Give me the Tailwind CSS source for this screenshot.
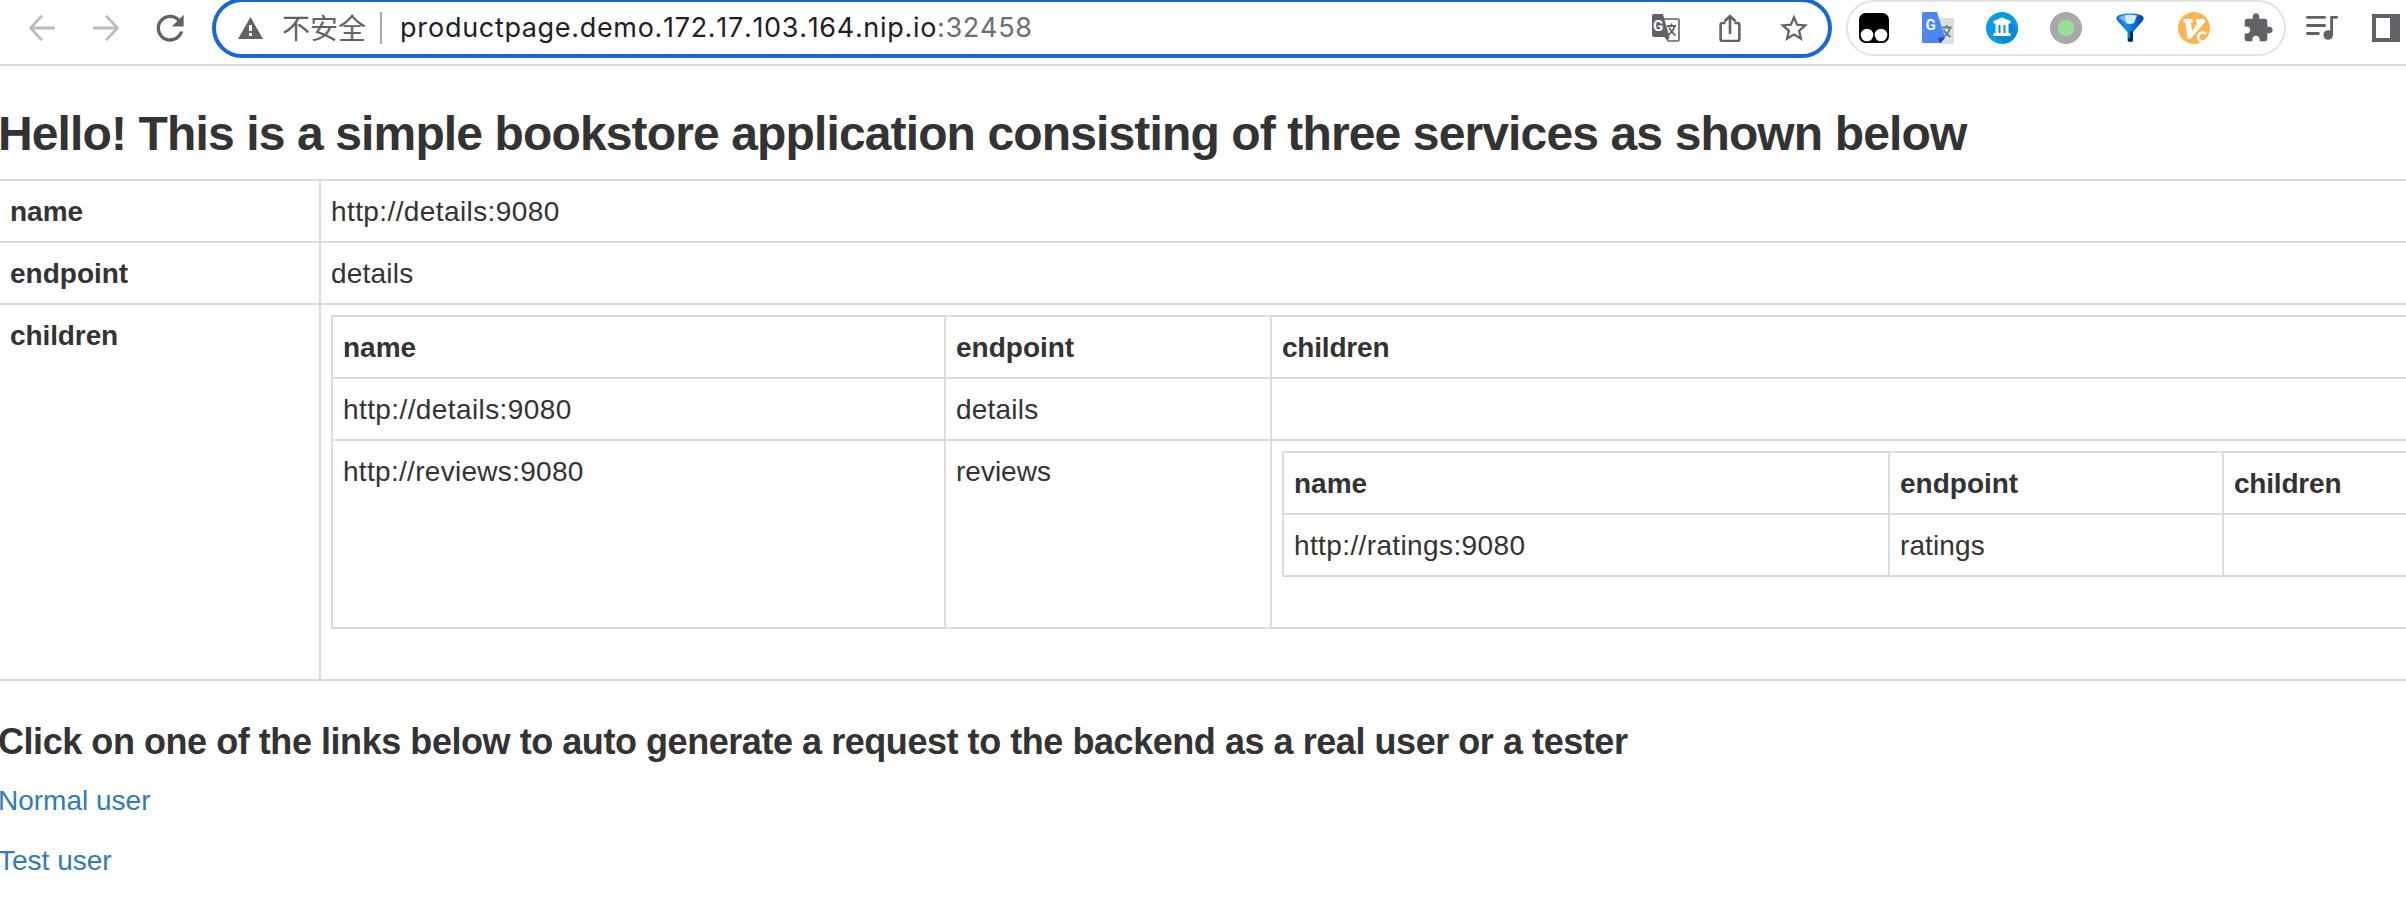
<!DOCTYPE html>
<html lang="en">
<head>
<meta charset="utf-8">
<title>Simple Bookstore App</title>
<script src="https://cdn.jsdelivr.net/npm/@tailwindcss/browser@4"></script>
</head>
<body class="h-[900px] w-[2406px] overflow-hidden bg-white font-['Liberation_Sans',Arial,sans-serif] text-[28px] leading-[40px] text-[#333]">

<!-- Browser toolbar -->
<header class="h-[66px] border-b-2 border-[#dcdcdc]">
  <div class="flex h-14 items-center pl-7 text-[#5f6368]">
    <svg class="size-7 shrink-0" viewBox="0 0 28 28" fill="none" stroke="#babcbe" stroke-width="2.800"><path d="M27 14H3M14 1.800L2.500 14 14 26.200"/></svg>
    <svg class="ml-9 size-7 shrink-0" viewBox="0 0 28 28" fill="none" stroke="#babcbe" stroke-width="2.800"><path d="M1 14h24M14 1.800L25.500 14 14 26.200"/></svg>
    <svg class="ml-9 size-7 shrink-0" viewBox="3.600 3.600 16.600 16.600" fill="currentColor"><path d="M17.650 6.350C16.200 4.900 14.210 4 12 4c-4.420 0-7.990 3.580-7.990 8s3.570 8 7.990 8c3.730 0 6.840-2.550 7.730-6h-2.080c-.82 2.330-3.040 4-5.650 4-3.310 0-6-2.690-6-6s2.690-6 6-6c1.660 0 3.140.69 4.220 1.780L13 11h7V4l-2.350 2.350z"/></svg>

    <!-- Address bar -->
    <div class="ml-7 flex h-[60px] w-[1620px] shrink-0 items-center rounded-full border-4 border-[#1967d2] pr-5 pl-[22px]">
      <svg class="h-[22px] w-[25px] shrink-0" viewBox="0 0 25 22"><path fill="#5f6368" d="M12.500 0L25 22H0z"/><path fill="#fff" d="M11 8h3v6h-3zM11 16h3v3h-3z"/></svg>
      <span class="ml-[19px] w-[84px] font-['Noto_Sans_CJK_SC',sans-serif] text-[28px] whitespace-nowrap -translate-y-px">不安全</span>
      <span class="ml-3.5 h-8 w-0.5 bg-[#a8abae]"></span>
      <span class="ml-[18px] font-['Inter',sans-serif] text-[27px] tracking-[0.69px] whitespace-nowrap text-[#202124] [font-kerning:none] [font-feature-settings:'calt'_0]">productpage.demo.172.17.103.164.nip.io<span class="text-[#6b6e72]">:32458</span></span>
      <div class="ml-auto flex gap-9">
        <svg class="size-7" viewBox="0 0 28 28">
          <path d="M12 5h14q1 0 1 1v20q0 1-1 1H16" fill="none" stroke="#5f6368" stroke-width="1.600"/>
          <path d="M2 0h9l6.500 23-2 4.500-3-4.500H2q-2 0-2-2V2q0-2 2-2z" fill="#5f6368"/>
          <text x="1" y="17" font-family="Roboto" font-size="15" font-weight="700" fill="#fff">G</text>
          <path d="M15 12h9M19.500 9.500V12M22.500 12.500Q21 18 15.500 21.500M17 13.500q2 4.500 6.500 8" fill="none" stroke="#5f6368" stroke-width="1.800"/>
        </svg>
        <svg class="size-7" viewBox="0 0 28 28" fill="none" stroke="#5f6368" stroke-width="2.600"><path d="M9.500 9H6.500Q4.600 9 4.600 11v14q0 2 2 2h14.800q2 0 2-2V11q0-2-2-2h-3M14 20V3M8.500 7.300L14 2l5.500 5.300"/></svg>
        <svg class="size-7" viewBox="2 1.700 20 20" fill="#5f6368"><path d="M22 9.240l-7.190-.62L12 2 9.190 8.630 2 9.240l5.460 4.730L5.820 21 12 17.270 18.180 21l-1.630-7.030L22 9.240zM12 15.400l-3.760 2.270 1-4.280-3.320-2.880 4.380-.38L12 6.100l1.710 4.040 4.380.38-3.320 2.880 1 4.280L12 15.400z"/></svg>
      </div>
    </div>

    <!-- Extensions -->
    <div class="ml-3.5 flex h-14 w-[440px] shrink-0 items-center gap-8 rounded-full border-2 border-[#e2e3e4] pl-2.5">
      <svg class="size-8 shrink-0" viewBox="0 0 32 32"><rect x="1" y="1" width="30" height="30" rx="6.500"/><circle cx="9" cy="23" r="6.300" fill="#fff"/><circle cx="23" cy="23" r="6.300" fill="#fff"/></svg>
      <svg class="size-8 shrink-0" viewBox="0 0 32 32">
        <path d="M12 6h18q2 0 2 2v22q0 2-2 2H19z" fill="#dedede"/>
        <path d="M20 15.500h9.500M24.700 13v2.500M28 16q-1.500 6-7.500 9.500M21.500 18q2.500 4.500 7 7" fill="none" stroke="#607d8b" stroke-width="1.800"/>
        <path d="M16 25.500h7.200L18 31.500z" fill="#3545b8"/>
        <path d="M1.500 0H15l8 25.500h-6.500L18 31H1.500Q0 31 0 29.500v-28Q0 0 1.500 0z" fill="#4a87ee"/>
        <path d="M16 25.500h7.200L18 31.500z" fill="#3545b8"/>
        <text x="3.500" y="18" font-family="Roboto" font-size="15" font-weight="700" fill="#fff">G</text>
      </svg>
      <svg class="size-8 shrink-0" viewBox="0 0 32 32">
        <circle cx="16" cy="16" r="16" fill="#0a9be8"/><path d="M25 10l6.500 9A16 16 0 0 1 20 31.500L8 24z" fill="#0788d2"/>
        <path d="M16 5.500L24.500 9v2.500h-17V9zM9.500 11h13v10h2v3h-17v-3h2z" fill="#fff"/><path d="M12.500 13h2v8h-2zM17.500 13h2v8h-2z" fill="#0a8fd8"/>
      </svg>
      <svg class="size-8 shrink-0" viewBox="0 0 32 32"><circle cx="16" cy="16" r="16" fill="#a9a9a9"/><circle cx="16" cy="16" r="8.200" fill="#98df98"/></svg>
      <svg class="size-8 shrink-0" viewBox="0 0 32 32">
        <defs><linearGradient id="funnel"><stop offset="0" stop-color="#1c6fc4"/><stop offset=".4" stop-color="#128cf0"/><stop offset=".65" stop-color="#0a6fd0"/><stop offset="1" stop-color="#04408f"/></linearGradient></defs>
        <path d="M2.500 5Q5 1.500 16 1.500T29.500 5q.5 2-1 4L19 20v9q-3 2-5.500 0v-9L3.500 9Q2 7 2.500 5z" fill="url(#funnel)"/>
        <path d="M10 3.500Q16 1.800 23 3.500L20 11q-4 2-8 0z" fill="#d3eafb"/><path d="M4.500 5.500Q7 3.800 10 3.500l2 7.500z" fill="#6fbcf5"/><path d="M14 19h5v10q-2.500 1.500-5 0z" fill="#052c5e"/><path d="M14 19h2v7h-2z" fill="#1780dd"/>
      </svg>
      <svg class="size-8 shrink-0" viewBox="0 0 32 32">
        <circle cx="16" cy="16" r="16" fill="#fbb450"/>
        <path d="M5.500 7h9v3.500H13l1 9 5.500-9H18V7h9v3L12.500 27H9.500l-2-16.500h-2z" fill="#fff"/>
        <path d="M28 21.800a4.600 4.600 0 1 0 .3 6.200" fill="none" stroke="#fff" stroke-width="2.600"/>
      </svg>
      <svg class="size-8 shrink-0" viewBox="0 0 24 24" fill="#5f6368"><path d="M20.500 11H19V7c0-1.100-.9-2-2-2h-4V3.500C13 2.120 11.880 1 10.500 1S8 2.120 8 3.500V5H4c-1.100 0-1.990.9-1.990 2v3.800H3.500c1.490 0 2.700 1.210 2.700 2.700s-1.210 2.700-2.700 2.700H2V20c0 1.100.9 2 2 2h3.800v-1.500c0-1.490 1.210-2.700 2.700-2.700 1.490 0 2.700 1.210 2.700 2.700V22H17c1.100 0 2-.9 2-2v-4h1.500c1.380 0 2.500-1.120 2.500-2.500S21.880 11 20.500 11z"/></svg>
    </div>

    <svg class="ml-5 size-8 shrink-0" viewBox="0 0 32 32" fill="none" stroke="#5f6368" stroke-width="2.800" stroke-linecap="round"><path d="M1.400 5.400h17.200M1.400 13.500h17.200M1.400 21.500h11M30.600 5.400h-5V23"/><circle cx="22.200" cy="23" r="4.800" fill="#5f6368" stroke="none"/></svg>
    <svg class="ml-8 size-8 shrink-0" viewBox="0 0 32 32"><path fill="#5f6368" fill-rule="evenodd" d="M2 2h28v28H2zM6 6v20h14V6z"/></svg>
  </div>
</header>

<!-- Page -->
<main>
  <h3 class="pt-[42px] pb-[19px] -indent-0.5 text-[48px] leading-[52px] font-bold tracking-[-0.87px] whitespace-nowrap">Hello! This is a simple bookstore application consisting of three services as shown below</h3>

  <table class="w-full table-fixed border-separate border-spacing-0 border-b-2 border-[#dcdcdc] text-left align-top">
    <colgroup><col class="w-[319px]"><col></colgroup>
    <tbody>
      <tr>
        <th class="border-t-2 border-[#dcdcdc] pt-[11px] pb-[9px] pl-2.5">name</th>
        <td class="border-t-2 border-l-2 border-[#dcdcdc] pt-[11px] pb-[9px] pl-2.5 tracking-[0.4px]">http://details:9080</td>
      </tr>
      <tr>
        <th class="border-t-2 border-[#dcdcdc] pt-[11px] pb-[9px] pl-2.5">endpoint</th>
        <td class="border-t-2 border-l-2 border-[#dcdcdc] pt-[11px] pb-[9px] pl-2.5 tracking-[0.2px]">details</td>
      </tr>
      <tr class="align-top">
        <th class="border-t-2 border-[#dcdcdc] pt-[11px] pb-[9px] pl-2.5 tracking-[-0.1px]">children</th>
        <td class="border-t-2 border-l-2 border-[#dcdcdc] py-2.5 pl-2.5">
          <table class="mb-10 w-full table-fixed border-separate border-spacing-0 border-b-2 border-[#dcdcdc]">
            <colgroup><col class="w-[613px]"><col class="w-[326px]"><col></colgroup>
            <tbody>
              <tr>
                <th class="border-t-2 border-l-2 border-[#dcdcdc] pt-[11px] pb-[9px] pl-2.5">name</th>
                <th class="border-t-2 border-l-2 border-[#dcdcdc] pt-[11px] pb-[9px] pl-2.5">endpoint</th>
                <th class="border-t-2 border-l-2 border-[#dcdcdc] pt-[11px] pb-[9px] pl-2.5 tracking-[-0.2px]">children</th>
              </tr>
              <tr>
                <td class="border-t-2 border-l-2 border-[#dcdcdc] pt-[11px] pb-[9px] pl-2.5 tracking-[0.4px]">http://details:9080</td>
                <td class="border-t-2 border-l-2 border-[#dcdcdc] pt-[11px] pb-[9px] pl-2.5 tracking-[0.2px]">details</td>
                <td class="border-t-2 border-l-2 border-[#dcdcdc]"></td>
              </tr>
              <tr class="align-top">
                <td class="border-t-2 border-l-2 border-[#dcdcdc] pt-[11px] pb-[9px] pl-2.5 tracking-[0.3px]">http://reviews:9080</td>
                <td class="border-t-2 border-l-2 border-[#dcdcdc] pt-[11px] pb-[9px] pl-2.5">reviews</td>
                <td class="border-t-2 border-l-2 border-[#dcdcdc] py-2.5 pl-2.5">
                  <table class="mb-10 w-full table-fixed border-separate border-spacing-0 border-b-2 border-[#dcdcdc]">
                    <colgroup><col class="w-[606px]"><col class="w-[334px]"><col></colgroup>
                    <tbody>
                      <tr>
                        <th class="border-t-2 border-l-2 border-[#dcdcdc] pt-[11px] pb-[9px] pl-2.5">name</th>
                        <th class="border-t-2 border-l-2 border-[#dcdcdc] pt-[11px] pb-[9px] pl-2.5">endpoint</th>
                        <th class="border-t-2 border-l-2 border-[#dcdcdc] pt-[11px] pb-[9px] pl-2.5 tracking-[-0.2px]">children</th>
                      </tr>
                      <tr>
                        <td class="border-t-2 border-l-2 border-[#dcdcdc] pt-[11px] pb-[9px] pl-2.5 tracking-[0.38px]">http://ratings:9080</td>
                        <td class="border-t-2 border-l-2 border-[#dcdcdc] pt-[11px] pb-[9px] pl-2.5 tracking-[0.1px]">ratings</td>
                        <td class="border-t-2 border-l-2 border-[#dcdcdc]"></td>
                      </tr>
                    </tbody>
                  </table>
                </td>
              </tr>
            </tbody>
          </table>
        </td>
      </tr>
    </tbody>
  </table>

  <h4 class="pt-[41px] pb-[19px] -indent-0.5 text-[36px] leading-[40px] font-bold tracking-[-0.45px] whitespace-nowrap">Click on one of the links below to auto generate a request to the backend as a real user or a tester</h4>
  <p class="mb-5 -indent-0.5"><a class="text-[#337ab7]">Normal user</a></p>
  <p class="-indent-0.5"><a class="text-[#337ab7]">Test user</a></p>
</main>
</body>
</html>
